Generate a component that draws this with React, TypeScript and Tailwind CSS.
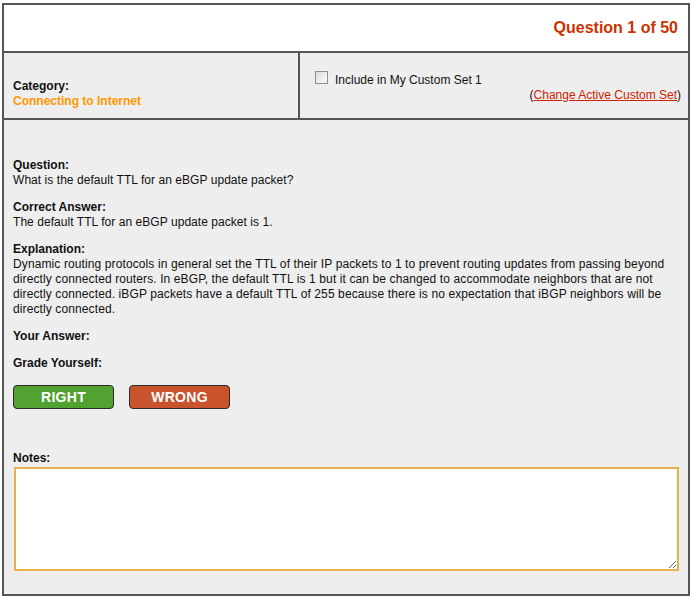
import React, { useState } from 'react';

const Label: React.FC<{ children: React.ReactNode }> = ({ children }) => (
    <div className="font-bold">{children}</div>
);

const GradeButton: React.FC<{ label: string; className: string }> = ({ label, className }) => (
    <button
        type="button"
        className={`w-[101px] h-[24px] rounded-[4px] border border-[#2a2a2a] text-white font-bold text-[14px] tracking-[0.3px] ${className}`}
    >
        {label}
    </button>
);

export default function App() {
    const [checked, setChecked] = useState(false);
    const [notes, setNotes] = useState('');

    return (
        <div className="w-full min-h-screen bg-white pt-[3px] pl-[2px] font-['Liberation_Sans',Arial,sans-serif] text-[12px] leading-[15px] text-[#111]">
            <div className="w-[688px] h-[593px] border-2 border-[#555] bg-[#eeeeee] flex flex-col">
                {/* Header */}
                <div className="h-[48px] shrink-0 bg-white border-b-2 border-[#555] flex items-center justify-end pr-[10px] pb-[2px]">
                    <span className="text-[16px] font-bold text-[#cc3300]">Question 1 of 50</span>
                </div>

                {/* Category / custom set row */}
                <div className="h-[67px] shrink-0 flex border-b-2 border-[#555]">
                    <div className="w-[296px] border-r-2 border-[#555] pl-[9px] pt-[26px]">
                        <Label>Category:</Label>
                        <div className="font-bold text-[#ff9900]">Connecting to Internet</div>
                    </div>
                    <div className="flex-1 pl-[15px] pr-[7px] pt-[20px]">
                        <label className="flex items-start gap-[7px]">
                            <input
                                type="checkbox"
                                checked={checked}
                                onChange={(e) => setChecked(e.target.checked)}
                                className="appearance-none w-[13px] h-[13px] mt-[-2px] border border-[#8e8f8f] bg-gradient-to-br from-[#dcdcdc] to-[#fbfbfb] checked:bg-[#3b7be0]"
                            />
                            <span>Include in My Custom Set 1</span>
                        </label>
                        <div className="text-right">
                            (<a href="#" className="text-[#cc2200] underline">Change Active Custom Set</a>)
                        </div>
                    </div>
                </div>

                {/* Body */}
                <div className="flex-1 pl-[9px] pr-[8px] pt-[38px] flex flex-col">
                    <div>
                        <Label>Question:</Label>
                        <div className="tracking-[0.05px]">What is the default TTL for an eBGP update packet?</div>
                    </div>
                    <div className="mt-[12px]">
                        <Label>Correct Answer:</Label>
                        <div className="tracking-[0.05px]">The default TTL for an eBGP update packet is 1.</div>
                    </div>
                    <div className="mt-[12px] pr-[4px]">
                        <Label>Explanation:</Label>
                        <div className="tracking-[0.11px]">
                            Dynamic routing protocols in general set the TTL of their IP packets to 1 to prevent routing updates from passing beyond directly connected routers. In eBGP, the default TTL is 1 but it can be changed to accommodate neighbors that are not directly connected. iBGP packets have a default TTL of 255 because there is no expectation that iBGP neighbors will be directly connected.
                        </div>
                    </div>
                    <div className="mt-[12px]">
                        <Label>Your Answer:</Label>
                    </div>
                    <div className="mt-[12px]">
                        <Label>Grade Yourself:</Label>
                    </div>
                    <div className="mt-[14px] flex gap-[15px]">
                        <GradeButton label="RIGHT" className="bg-[#52a232]" />
                        <GradeButton label="WRONG" className="bg-[#c8532d]" />
                    </div>
                    <div className="mt-[42px]">
                        <Label>Notes:</Label>
                    </div>
                    <textarea
                        autoFocus
                        value={notes}
                        onChange={(e) => setNotes(e.target.value)}
                        className="mt-[1px] ml-[1px] w-[665px] h-[104px] bg-white border-2 border-[#e8b04f] outline-none resize-y p-[2px] font-['Liberation_Sans',Arial,sans-serif] text-[12px]"
                    />
                </div>
            </div>
        </div>
    );
}
